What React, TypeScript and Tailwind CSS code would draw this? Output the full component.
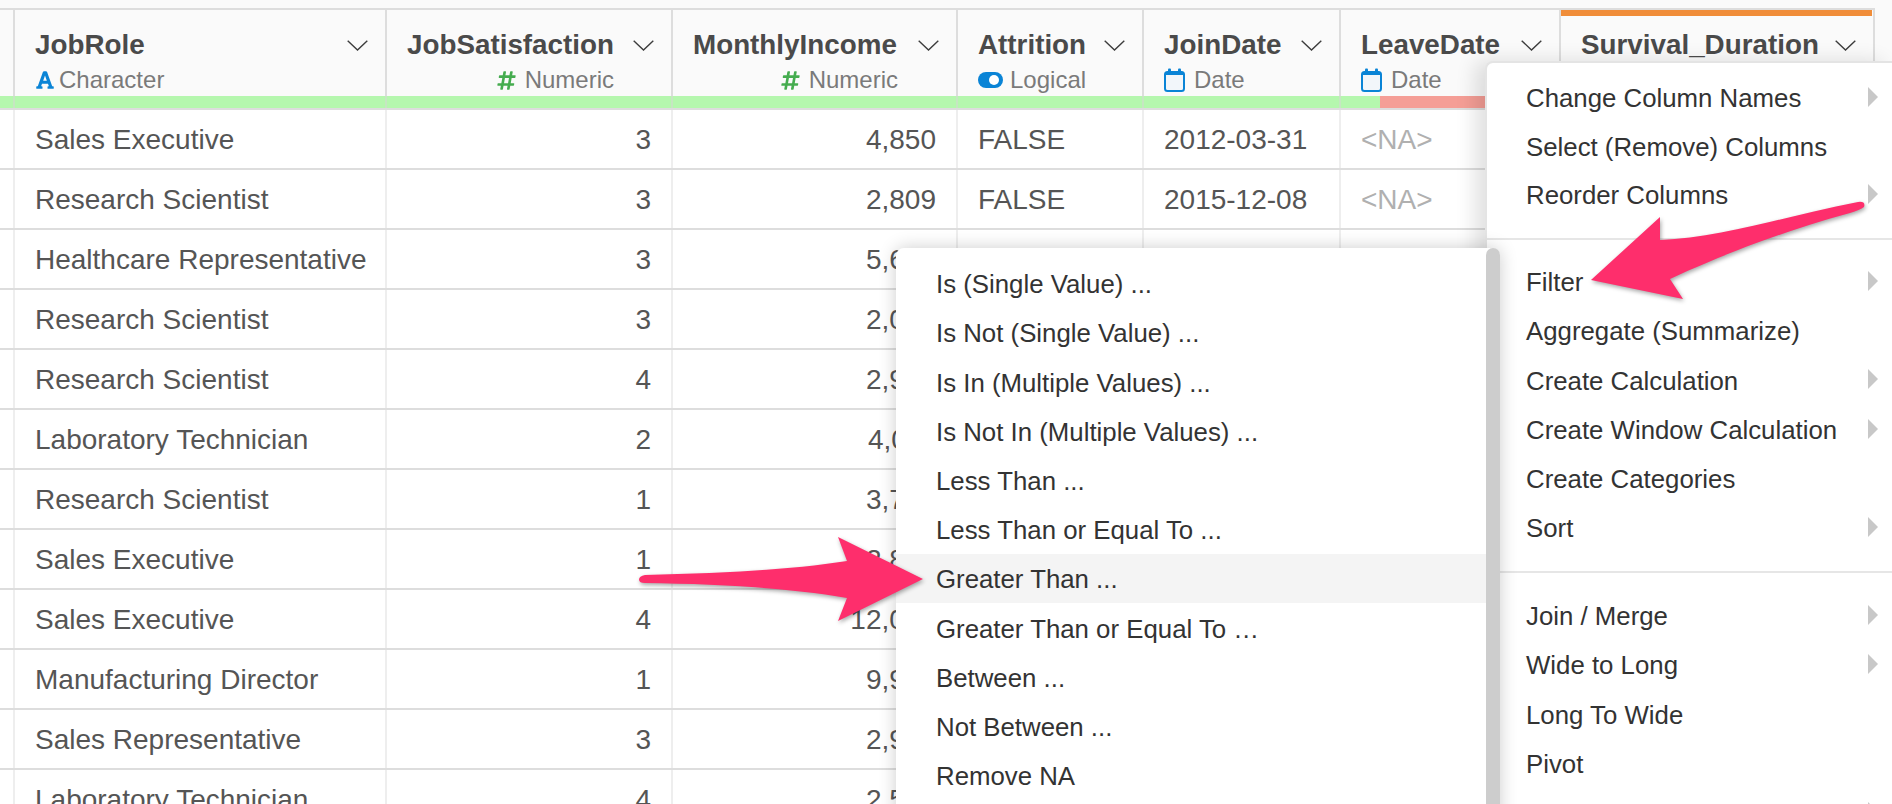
import { FaFont, FaHashtag } from 'react-icons/fa';

type ColType = 'Character' | 'Numeric' | 'Logical' | 'Date';

type Column = {
  name: string;
  type: ColType;
  width: string;
  align: 'left' | 'right';
  subPad?: string;
};

const columns: Column[] = [
  { name: 'JobRole', type: 'Character', width: 'w-[372px]', align: 'left' },
  { name: 'JobSatisfaction', type: 'Numeric', width: 'w-[286px]', align: 'right', subPad: 'pr-[57px]' },
  { name: 'MonthlyIncome', type: 'Numeric', width: 'w-[285px]', align: 'right', subPad: 'pr-[58px]' },
  { name: 'Attrition', type: 'Logical', width: 'w-[186px]', align: 'left' },
  { name: 'JoinDate', type: 'Date', width: 'w-[197px]', align: 'left' },
  { name: 'LeaveDate', type: 'Date', width: 'w-[220px]', align: 'left' },
  { name: 'Survival_Duration', type: 'Numeric', width: 'w-[314px]', align: 'left' },
];

const rows: string[][] = [
  ['Sales Executive', '3', '4,850', 'FALSE', '2012-03-31', '<NA>', ''],
  ['Research Scientist', '3', '2,809', 'FALSE', '2015-12-08', '<NA>', ''],
  ['Healthcare Representative', '3', '5,673', 'FALSE', '2011-06-14', '<NA>', ''],
  ['Research Scientist', '3', '2,073', 'FALSE', '2014-02-20', '<NA>', ''],
  ['Research Scientist', '4', '2,926', 'FALSE', '2013-09-02', '<NA>', ''],
  ['Laboratory Technician', '2', '4,011', 'FALSE', '2012-11-19', '<NA>', ''],
  ['Research Scientist', '1', '3,730', 'FALSE', '2016-04-11', '<NA>', ''],
  ['Sales Executive', '1', '2,851', 'FALSE', '2010-08-27', '<NA>', ''],
  ['Sales Executive', '4', '12,061', 'FALSE', '2011-01-05', '<NA>', ''],
  ['Manufacturing Director', '1', '9,985', 'FALSE', '2015-07-30', '<NA>', ''],
  ['Sales Representative', '3', '2,977', 'FALSE', '2014-10-16', '<NA>', ''],
  ['Laboratory Technician', '4', '2,571', 'FALSE', '2013-05-23', '<NA>', ''],
];

const mainMenu: { label: string; arrow?: boolean }[][] = [
  [
    { label: 'Change Column Names', arrow: true },
    { label: 'Select (Remove) Columns' },
    { label: 'Reorder Columns', arrow: true },
  ],
  [
    { label: 'Filter', arrow: true },
    { label: 'Aggregate (Summarize)' },
    { label: 'Create Calculation', arrow: true },
    { label: 'Create Window Calculation', arrow: true },
    { label: 'Create Categories' },
    { label: 'Sort', arrow: true },
  ],
  [
    { label: 'Join / Merge', arrow: true },
    { label: 'Wide to Long', arrow: true },
    { label: 'Long To Wide' },
    { label: 'Pivot' },
    { label: 'Separate', arrow: true },
  ],
];

const filterMenu = [
  'Is (Single Value) ...',
  'Is Not (Single Value) ...',
  'Is In (Multiple Values) ...',
  'Is Not In (Multiple Values) ...',
  'Less Than ...',
  'Less Than or Equal To ...',
  'Greater Than ...',
  'Greater Than or Equal To …',
  'Between ...',
  'Not Between ...',
  'Remove NA',
];

function Chevron() {
  return (
    <svg width="21" height="11" viewBox="0 0 21 11" className="shrink-0" fill="none" stroke="#3c3c3c" strokeWidth="1.4">
      <path d="M0.7 0.7 L10.5 10 L20.3 0.7" />
    </svg>
  );
}

function CalendarIcon() {
  return (
    <svg width="21" height="24" viewBox="0 0 21 24" className="mr-[9px] shrink-0">
      <rect x="1" y="4" width="19" height="19" rx="2.5" fill="#f2f6fa" stroke="#0a84d6" strokeWidth="2" />
      <rect x="1" y="4" width="19" height="3" fill="#0a84d6" />
      <rect x="4" y="0.5" width="3" height="5" rx="1" fill="#0a84d6" />
      <rect x="14" y="0.5" width="3" height="5" rx="1" fill="#0a84d6" />
    </svg>
  );
}

function ToggleIcon() {
  return (
    <svg width="25" height="16" viewBox="0 0 25 16" className="mr-[7px] shrink-0">
      <rect width="25" height="16" rx="8" fill="#0a84d6" />
      <circle cx="16" cy="8" r="5" fill="#ffffff" />
    </svg>
  );
}

function TypeIcon({ type }: { type: ColType }) {
  if (type === 'Character') return <FaFont className="mr-[4px] shrink-0 text-[20px] text-[#0a84d6]" />;
  if (type === 'Numeric') return <FaHashtag className="mr-[8px] shrink-0 text-[21px] text-[#45ac4f]" />;
  if (type === 'Logical') return <ToggleIcon />;
  return <CalendarIcon />;
}

function HeaderCell({ col }: { col: Column }) {
  const selected = col.name === 'Survival_Duration';
  return (
    <div className={`${col.width} flex shrink-0 flex-col border-r-2 border-[#dddddd] bg-[#fafafa]`}>
      <div className={`mr-px h-[6px] ${selected ? 'bg-[#f08d39]' : ''}`} />
      <div className="mt-[13px] flex h-[32px] items-center justify-between pr-[17px] pl-[20px]">
        <span className="text-[27.8px] leading-[32px] font-bold whitespace-nowrap text-[#4a4a4a]">{col.name}</span>
        <Chevron />
      </div>
      <div
        className={`mt-[5px] flex h-[28px] items-center pl-[20px] text-[24px] text-[#7a7a7a] ${
          col.align === 'right' ? `justify-end ${col.subPad}` : ''
        }`}
      >
        <TypeIcon type={col.type} />
        <span>{col.type}</span>
      </div>
    </div>
  );
}

function BarCell({ col }: { col: Column }) {
  return (
    <div className={`${col.width} flex h-[12px] shrink-0 border-r-2 border-[#c6e6c2] bg-[#b5f7ae]`}>
      {col.name === 'LeaveDate' && (
        <>
          <div className="w-[39px]" />
          <div className="flex-1 bg-[#f59e96]" />
        </>
      )}
    </div>
  );
}

function BodyRow({ row }: { row: string[] }) {
  return (
    <div className="flex h-[60px] w-[1875px] border-b-2 border-[#dddddd] bg-white">
      <div className="w-[15px] shrink-0 border-r-2 border-[#eeeeee]" />
      {columns.map((col, i) => (
        <div
          key={col.name}
          className={`${col.width} flex shrink-0 items-center border-r-2 border-[#eeeeee] px-[20px] pt-[2px] text-[28px] whitespace-nowrap ${
            col.align === 'right' ? 'justify-end' : ''
          } ${row[i] === '<NA>' ? 'text-[#b0b0b0]' : 'text-[#555555]'}`}
        >
          {row[i]}
        </div>
      ))}
    </div>
  );
}

function MenuArrow() {
  return <span className="absolute top-[14px] right-[14px] h-0 w-0 border-y-[10px] border-l-[10px] border-y-transparent border-l-[#c8c8c8]" />;
}

const groupPad = ['pb-[19.2px]', 'border-t-2 border-[#e6e6e6] pt-[17px] pb-[18.8px]', 'border-t-2 border-[#e6e6e6] pt-[18px]'];

function ColumnMenu() {
  return (
    <div className="absolute top-[61px] right-0 left-[1485px] z-10 rounded-tl-lg border-t-2 border-l-2 border-[#e4e4e4] bg-white pt-[10px] text-[25.8px] text-[#333333] shadow-[-10px_0_20px_rgba(0,0,0,0.12)]">
      {mainMenu.map((group, g) => (
        <div key={g} className={groupPad[g]}>
          {group.map((item) => (
            <div
              key={item.label}
              className={`relative flex items-center pt-[2px] pl-[39px] whitespace-nowrap ${
                g === 0 ? 'h-[48.6px]' : 'h-[49.2px]'
              }`}
            >
              {item.label}
              {item.arrow && <MenuArrow />}
            </div>
          ))}
        </div>
      ))}
    </div>
  );
}

function FilterMenu() {
  return (
    <div className="absolute top-[248px] left-[896px] z-20 flex h-[600px] w-[604px] rounded-t-lg bg-white text-[25.8px] text-[#333333] shadow-[0_0_18px_rgba(0,0,0,0.2)]">
      <div className="flex-1 pt-[11px]">
        {filterMenu.map((label) => (
          <div
            key={label}
            className={`flex h-[49.2px] items-center pt-[2px] pl-[40px] whitespace-nowrap ${
              label === 'Greater Than ...' ? 'bg-[#f4f4f4]' : ''
            }`}
          >
            {label}
          </div>
        ))}
      </div>
      <div className="w-[14px] rounded-t-lg bg-[#cdcdcd]" />
    </div>
  );
}

function Arrows() {
  return (
    <svg
      className="pointer-events-none absolute inset-0 z-30 drop-shadow-[1px_2px_2px_rgba(0,0,0,0.35)]"
      width="1892"
      height="804"
      viewBox="0 0 1892 804"
      fill="#fe2e6c"
    >
      <path d="M1591 280 L1660 217 L1660 240 C1720 238 1790 215 1858 202 Q1866 201 1864 207 Q1860 210 1850 213 C1780 232 1715 258 1670 279 L1683 299 Z" />
      <path d="M923 579 L838 537 L847 561 C790 570 720 573 645 575 Q639 576 639 579.5 Q639 583 645 583 C720 584 790 588 847 598 L838 621 Z" />
    </svg>
  );
}

export default function App() {
  return (
    <div className="relative h-[804px] w-[1892px] overflow-hidden bg-[#fafafa] font-['Liberation_Sans',Arial,sans-serif]">
      <div className="h-[8px]" />
      <div className="w-[1875px] border-t-2 border-[#dddddd]">
        <div className="flex h-[86px]">
          <div className="w-[15px] shrink-0 border-r-2 border-[#dddddd] bg-[#fafafa]" />
          {columns.map((col) => (
            <HeaderCell key={col.name} col={col} />
          ))}
        </div>
        <div className="flex border-b-2 border-[#dddddd]">
          <div className="w-[15px] shrink-0 border-r-2 border-[#c6e6c2] bg-[#b5f7ae]" />
          {columns.map((col) => (
            <BarCell key={col.name} col={col} />
          ))}
        </div>
        {rows.map((row, i) => (
          <BodyRow key={i} row={row} />
        ))}
      </div>
      <ColumnMenu />
      <FilterMenu />
      <Arrows />
    </div>
  );
}
